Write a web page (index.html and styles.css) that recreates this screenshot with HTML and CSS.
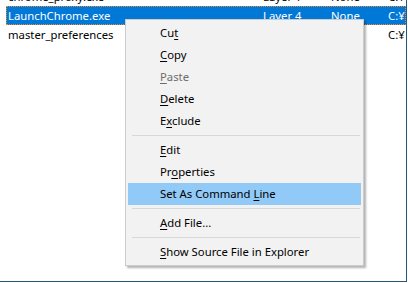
FILE: index.html
```html
<!DOCTYPE html>
<html>
<head>
<meta charset="utf-8">
<link rel="stylesheet" href="styles.css">
</head>
<body>
<div class="window">
  <div class="list">
    <div class="row">
      <span class="c-name">chrome_proxy.exe</span><span class="c-layer">Layer 1</span><span class="c-none">None</span><span class="c-path">C:¥Program</span>
    </div>
    <div class="row selected">
      <span class="c-name">LaunchChrome.exe</span><span class="c-layer">Layer 4</span><span class="c-none">None</span><span class="c-path">C:¥Program</span>
    </div>
    <div class="row">
      <span class="c-name">master_preferences</span><span class="c-layer"></span><span class="c-none"></span><span class="c-path">C:¥Program</span>
    </div>
  </div>
  <div class="menu">
    <div class="item">Cu<u>t</u></div>
    <div class="item"><u>C</u>opy</div>
    <div class="item disabled"><u>P</u>aste</div>
    <div class="item"><u>D</u>elete</div>
    <div class="item">E<u>x</u>clude</div>
    <div class="sep"></div>
    <div class="item"><u>E</u>dit</div>
    <div class="item">Pr<u>o</u>perties</div>
    <div class="item hot">Set As Command <u>L</u>ine</div>
    <div class="sep"></div>
    <div class="item"><u>A</u>dd File...</div>
    <div class="sep"></div>
    <div class="item"><u>S</u>how Source File in Explorer</div>
  </div>
</div>
</body>
</html>
```
FILE: styles.css
```css
html, body {
  margin: 0;
  padding: 0;
  background: #ffffff;
}
body {
  font-family: "Noto Sans", "Open Sans", sans-serif;
  font-size: 11.3px;
  color: #000;
}
.window {
  position: relative;
  width: 406px;
  height: 281px;
  border-right: 1px solid #24587d;
  border-bottom: 1px solid #24587d;
  overflow: hidden;
  background: #fff;
}
.list {
  margin-top: -13px;
  padding-left: 6px;
}
.row {
  display: flex;
  height: 19px;
  line-height: 17px;
  box-sizing: border-box;
  border: 1px dotted transparent;
  white-space: nowrap;
  overflow: hidden;
}
.row.selected {
  background: #0078d7;
  color: #fff;
  border-color: #f08a2c;
}
.c-name { width: 255px; padding-left: 1px; flex: none; }
.c-layer { width: 68px; flex: none; }
.c-none { width: 57px; flex: none; }
.c-path { flex: none; }
.menu {
  position: absolute;
  left: 125px;
  top: 19px;
  box-sizing: content-box;
  background: #f2f2f2;
  border: 1px solid #cccccc;
  padding: 2px;
  box-shadow: 2px 2px 2px rgba(0, 0, 0, 0.3);
  width: 233px;
}
.item {
  height: 22px;
  line-height: 22px;
  padding-left: 32px;
  white-space: nowrap;
}
.item u {
  text-decoration-thickness: 1px;
  text-underline-offset: 2px;
}
.item.disabled { color: #6d6d6d; }
.item.hot { background: #91c9f7; }
.sep {
  height: 1px;
  margin: 3px 1px 3px 4px;
  background: #d7d7d7;
}
```
